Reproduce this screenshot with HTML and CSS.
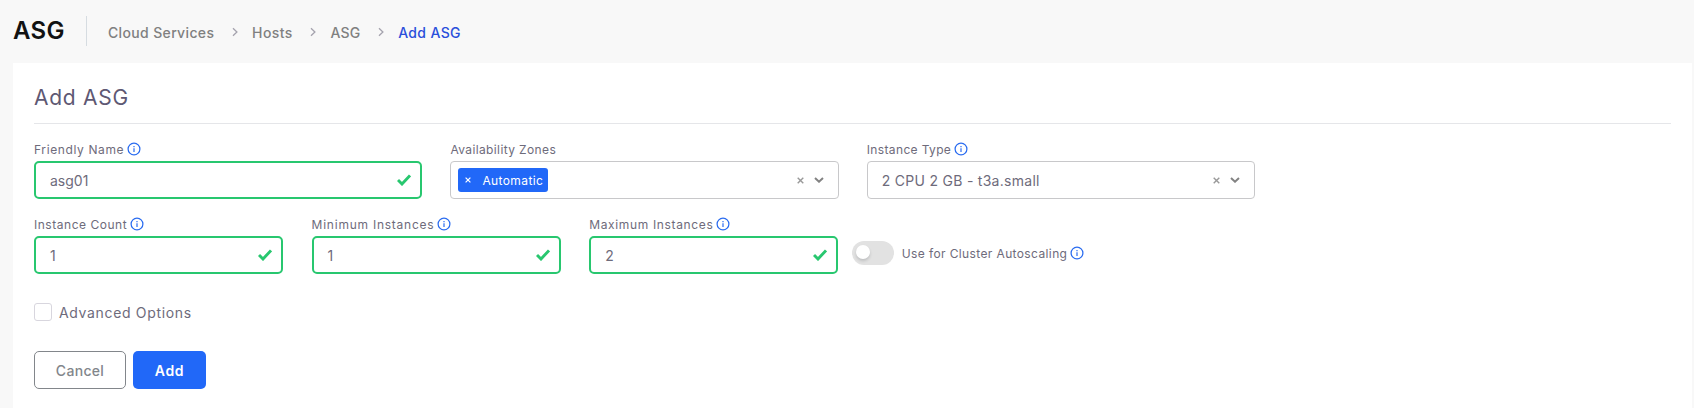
FILE: index.html
```
<!DOCTYPE html>
<html lang="en">
<head>
<meta charset="utf-8">
<title>Add ASG</title>
<link rel="stylesheet" href="styles.css">
</head>
<body>
<svg class="defs" width="0" height="0">
  <symbol id="info" viewBox="0 0 14 14"><circle cx="7" cy="7" r="5.9" fill="none" stroke="currentColor" stroke-width="1.25"/><path d="M7 6.2v3.8M7 4v1.2" fill="none" stroke="currentColor" stroke-width="1.2"/></symbol>
  <symbol id="check" viewBox="0 0 14 12"><path d="M1 6 5 10 13 1.4" fill="none" stroke="currentColor" stroke-width="2.9"/></symbol>
  <symbol id="crumb" viewBox="0 0 6 10"><path d="M1 1.2 4.9 5 1 8.8" fill="none" stroke="currentColor" stroke-width="1.3"/></symbol>
  <symbol id="cross" viewBox="0 0 7 7"><path d="M.7.7l5.6 5.6M6.3.7.7 6.3" fill="none" stroke="currentColor" stroke-width="1.4"/></symbol>
  <symbol id="down" viewBox="0 0 10 6"><path d="M1 1l4 3.7L9 1" fill="none" stroke="currentColor" stroke-width="2"/></symbol>
</svg>
<header class="topbar">
  <h1 class="page-title">ASG</h1>
  <nav class="crumbs">
    <a class="c1">Cloud Services</a><svg class="sep"><use href="#crumb"/></svg>
    <a class="c2">Hosts</a><svg class="sep"><use href="#crumb"/></svg>
    <a class="c3">ASG</a><svg class="sep"><use href="#crumb"/></svg>
    <a class="current">Add ASG</a>
  </nav>
</header>
<main class="card">
  <h2 class="card-title">Add ASG</h2>
  <form>
    <div class="row quarters">
      <div class="field">
        <label class="label"><span class="l-name">Friendly Name</span><svg class="info"><use href="#info"/></svg></label>
        <div class="control valid"><span class="v-name">asg01</span><svg class="check"><use href="#check"/></svg></div>
      </div>
      <div class="field">
        <label class="label"><span class="l-zones">Availability Zones</span></label>
        <div class="control select multi"><span class="tag"><svg class="cross"><use href="#cross"/></svg><span class="v-tag">Automatic</span></span><svg class="cross clear"><use href="#cross"/></svg><svg class="down"><use href="#down"/></svg></div>
      </div>
      <div class="field">
        <label class="label"><span class="l-type">Instance Type</span><svg class="info"><use href="#info"/></svg></label>
        <div class="control select"><span class="v-type">2 CPU 2 GB - t3a.small</span><svg class="cross clear"><use href="#cross"/></svg><svg class="down"><use href="#down"/></svg></div>
      </div>
    </div>
    <div class="row sixths">
      <div class="field">
        <label class="label"><span class="l-count">Instance Count</span><svg class="info"><use href="#info"/></svg></label>
        <div class="control valid"><span>1</span><svg class="check"><use href="#check"/></svg></div>
      </div>
      <div class="field">
        <label class="label"><span class="l-min">Minimum Instances</span><svg class="info"><use href="#info"/></svg></label>
        <div class="control valid"><span>1</span><svg class="check"><use href="#check"/></svg></div>
      </div>
      <div class="field">
        <label class="label"><span class="l-max">Maximum Instances</span><svg class="info"><use href="#info"/></svg></label>
        <div class="control valid"><span>2</span><svg class="check"><use href="#check"/></svg></div>
      </div>
      <div class="toggle-field">
        <span class="switch"><span class="knob"></span></span>
        <label class="label"><span class="l-auto">Use for Cluster Autoscaling</span><svg class="info"><use href="#info"/></svg></label>
      </div>
    </div>
    <div class="option"><span class="box"></span><span class="l-adv">Advanced Options</span></div>
    <div class="actions"><button type="button" class="btn cancel">Cancel</button><button type="button" class="btn add">Add</button></div>
  </form>
</main>
</body>
</html>
```
FILE: styles.css
```
* { box-sizing: border-box; }
html, body { height: 100%; }
body { margin: 0; background: #f8f8f8; color: #6e6b7b; font-family: Inter, sans-serif; font-size: 14px; overflow: hidden; display: flex; flex-direction: column; }
svg { display: block; flex: none; }
.defs { position: absolute; }
.topbar { height: 63px; flex: none; display: flex; padding: 16px 0 0 13px; }
.page-title { margin: 0; width: 74px; height: 30px; line-height: 30px; border-right: 1px solid #d6dce1; font-size: 24px; font-weight: 600; color: #121212; letter-spacing: .4px; }
.crumbs { display: flex; align-items: center; height: 32px; margin-left: 21px; font-weight: 500; color: #808080; white-space: nowrap; }
.crumbs .current { color: #2a4fdb; letter-spacing: .35px; }
.c1 { letter-spacing: .35px; }
.c2 { letter-spacing: .4px; }
.c3 { letter-spacing: .2px; }
.sep { width: 6px; height: 10px; margin: 0 14.4px 0 17.4px; color: #a5a3ae; }
.card { flex: 1; margin: 0 2px 0 13px; padding: 0 21px; background: #fff; }
.card-title { margin: 0; height: 61px; padding-top: 5px; line-height: 59px; border-bottom: 1px solid #e5e6e9; font-size: 21px; font-weight: 400; color: #5e5873; letter-spacing: .75px; }
.row { display: flex; column-gap: 28px; }
.quarters { padding-top: 16px; }
.quarters .field { width: 388.4px; }
.sixths { padding-top: 16px; column-gap: 28.6px; }
.sixths .field { width: 249px; }
.label { display: flex; align-items: center; gap: 3px; height: 18px; font-size: 12px; white-space: nowrap; }
.field .label { margin-bottom: 3px; }
.l-name { letter-spacing: .62px; }
.l-zones { letter-spacing: .38px; }
.l-type { letter-spacing: .36px; }
.l-count { letter-spacing: .53px; }
.l-min { letter-spacing: .76px; }
.l-max { letter-spacing: .65px; }
.l-auto { letter-spacing: .38px; }
.l-adv { letter-spacing: .66px; }
.v-type { letter-spacing: .28px; }
.v-tag { letter-spacing: .4px; }
.info { width: 14px; height: 14px; color: #2a6cf0; }
.control { height: 38px; display: flex; align-items: center; justify-content: space-between; border-radius: 5px; padding: 0 9px 0 14px; white-space: nowrap; }
.valid { border: 2px solid #28c76f; }
.check { width: 14px; height: 12px; color: #28c76f; }
.select { border: 1px solid #c8c8ca; border-radius: 4px; padding: 0 14px; }
.multi { padding-left: 7px; }
.tag { display: flex; align-items: center; gap: 11px; height: 24px; width: 90px; padding-left: 7px; background: #2168f8; color: #fff; border-radius: 3px; font-size: 12px; }
.cross { width: 6px; height: 6px; }
.clear { width: 7px; height: 7px; margin-left: auto; margin-right: 10px; color: #999; }
.down { width: 10px; height: 6px; color: #828282; }
.toggle-field { display: flex; align-items: center; gap: 8px; height: 24px; margin: 26px 0 0 -15px; }
.switch { width: 42px; height: 24px; padding: 4px; border-radius: 12px; background: #e2e2e2; }
.knob { display: block; width: 14px; height: 14px; border-radius: 50%; background: #fff; box-shadow: 0 2px 3px rgba(34, 41, 47, .18); }
.option { display: flex; align-items: center; gap: 7px; height: 18px; margin-top: 29px; }
.box { width: 18px; height: 18px; border: 1px solid #d8d6de; border-radius: 3px; }
.actions { display: flex; gap: 7px; margin-top: 30px; }
.btn { height: 38px; border-radius: 5px; padding: 0; font: 500 14px Inter, sans-serif; letter-spacing: .3px; }
.cancel { width: 92px; border: 1px solid #82868b; background: #fff; color: #82868b; }
.add { width: 73px; border: 0; background: #2168f8; color: #fff; font-weight: 600; letter-spacing: .7px; }
```
